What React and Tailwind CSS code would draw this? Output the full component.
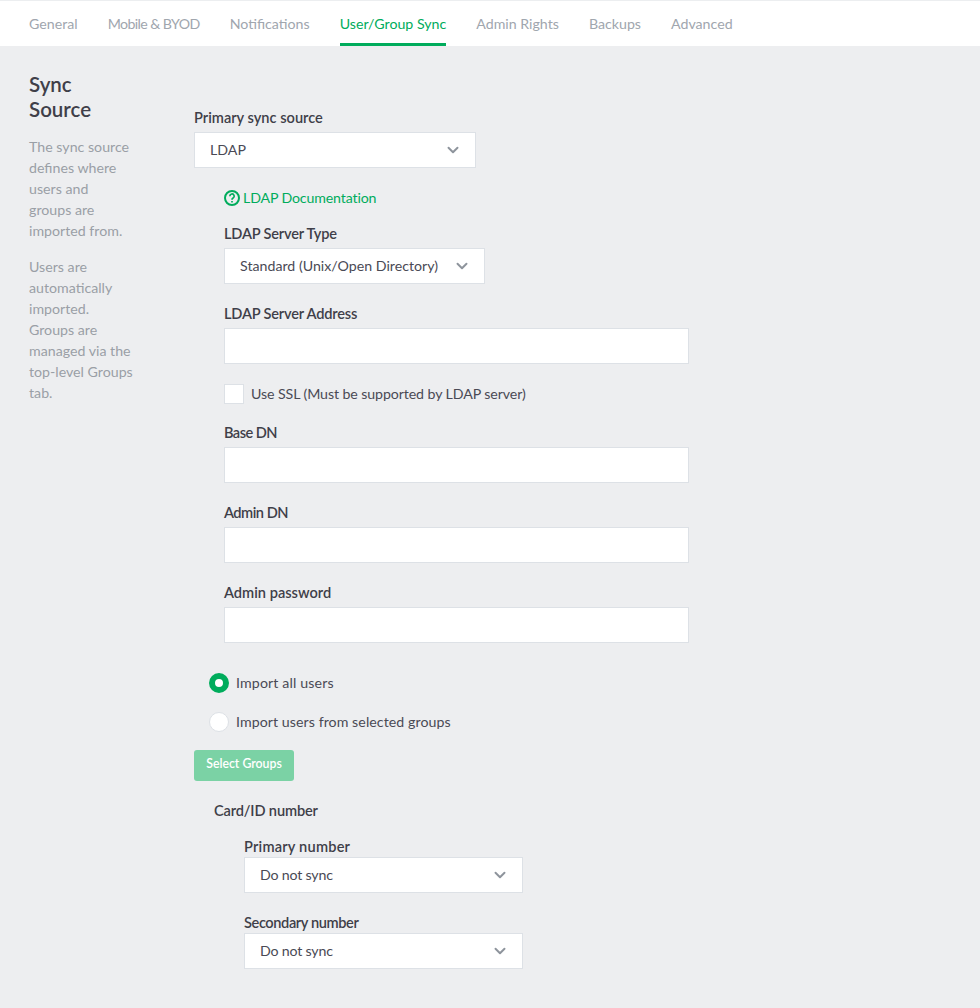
import React from 'react';
import { ChevronDown } from 'lucide-react';

const tabs = [
  { label: 'General', cls: '' },
  { label: 'Mobile & BYOD', cls: 'tracking-[-0.6px]' },
  { label: 'Notifications', cls: '' },
  { label: 'User/Group Sync', cls: '' },
  { label: 'Admin Rights', cls: '' },
  { label: 'Backups', cls: '' },
  { label: 'Advanced', cls: '' },
];

const Select = ({ value, className, textClass = '' }) => (
  <div className={`h-9 bg-white border border-[#dde1e6] flex items-center justify-between pl-[15px] text-[#4a4a55] ${className}`}>
    <span className={`leading-[18px] ${textClass}`}>{value}</span>
    <ChevronDown size={18} strokeWidth={2.6} className="text-[#8e949c]" />
  </div>
);

const Label = ({ children, className = '' }) => (
  <div className={`h-5 leading-5 text-[14.6px] font-semibold text-[#3f3f49] ${className}`}>{children}</div>
);

const Input = () => <div className="w-[465px] h-9 bg-white border border-[#dde1e6]" />;

export default function App() {
  return (
    <div className="min-h-[1008px] bg-[#edeef0] text-[14.2px] font-['Lato','Open_Sans',sans-serif]">
      {/* TAB NAV */}
      <div className="h-[46px] bg-white border-t border-[#eceef0] flex pl-[29px] gap-[30px]">
        {tabs.map((tab) => (
          <div key={tab.label} className={`pt-[13px] leading-5 ${tab.cls} ${tab.label === 'User/Group Sync' ? 'text-[#00ac5c] border-b-[3px] border-[#00ac5c]' : 'text-[#a0a6ae]'}`}>{tab.label}</div>
        ))}
      </div>

      <div className="flex">
        {/* SIDE TEXT */}
        <div className="w-[165px] mr-[29px] pl-[29px] pr-[31px] pt-[26px] shrink-0">
          <h2 className="text-[20.5px] leading-[25px] font-semibold text-[#3f3f49]">Sync Source</h2>
          <p className="mt-[14px] leading-[21px] text-[#9a9fa6]">The sync source defines where users and groups are imported from.</p>
          <p className="mt-[15px] leading-[21px] text-[#9a9fa6]">Users are automatically imported. Groups are managed via the top-level Groups tab.</p>
        </div>

        {/* FORM */}
        <div className="pt-[62px]">
          <Label>Primary sync source</Label>
          <Select value="LDAP" className="w-[282px] mt-1 pr-[13px]" />

          <div className="pl-[30px]">
            <div className="mt-5 flex items-center gap-[3px] h-5 text-[#00ac5c]">
              <svg width="16" height="16" viewBox="0 0 16 16" fill="none" stroke="#00ac5c">
                <circle cx="8" cy="8" r="7" strokeWidth="2" />
                <path d="M5.8 6.2a2.2 2.2 0 1 1 3.3 1.9c-.7.4-1.1.8-1.1 1.6" strokeWidth="1.7" />
                <path d="M8 11v1.6" strokeWidth="1.7" />
              </svg>
              <span className="leading-[18px] tracking-[-0.15px]">LDAP Documentation</span>
            </div>

            <Label className="mt-[16px] tracking-[-0.2px]">LDAP Server Type</Label>
            <Select value="Standard (Unix/Open Directory)" className="w-[261px] mt-1 pr-[13px]" />

            <Label className="mt-5 tracking-[-0.2px]">LDAP Server Address</Label>
            <div className="mt-1"><Input /></div>

            <div className="mt-5 h-5 flex items-center gap-[7px] text-[#4a4a55]">
              <div className="w-5 h-5 bg-white border border-[#dde1e6]" />
              <span className="leading-[18px] tracking-[-0.1px]">Use SSL (Must be supported by LDAP server)</span>
            </div>

            <Label className="mt-[19px] tracking-[-0.55px]">Base DN</Label>
            <div className="mt-1"><Input /></div>

            <Label className="mt-5 tracking-[-0.5px]">Admin DN</Label>
            <div className="mt-1"><Input /></div>

            <Label className="mt-5">Admin password</Label>
            <div className="mt-1"><Input /></div>
          </div>

          <div className="pl-[15px] mt-[30px] flex items-center gap-[7px] h-5 text-[#4a4a55]">
            <div className="w-5 h-5 rounded-full border-[6px] border-[#00ac5c] bg-white" />
            <span className="leading-[18px] tracking-[0.13px]">Import all users</span>
          </div>
          <div className="pl-[15px] mt-[19px] flex items-center gap-[7px] h-5 text-[#4a4a55]">
            <div className="w-5 h-5 rounded-full border border-[#dde1e6] bg-white" />
            <span className="leading-[18px] tracking-[0.06px]">Import users from selected groups</span>
          </div>

          <button className="mt-[18px] w-[100px] h-[31px] rounded-[3px] bg-[#7bd2a5] text-white text-[12.3px] font-semibold flex items-center justify-center pb-[3px]">Select Groups</button>

          <Label className="mt-5 ml-5 tracking-[-0.15px]">Card/ID number</Label>
          <div className="pl-[50px]">
            <Label className="mt-4 tracking-[0.2px]">Primary number</Label>
            <Select value="Do not sync" textClass="tracking-[-0.2px]" className="w-[279px] mt-0 pr-[13px]" />
            <Label className="mt-5 tracking-[-0.4px]">Secondary number</Label>
            <Select value="Do not sync" textClass="tracking-[-0.2px]" className="w-[279px] mt-0 pr-[13px]" />
          </div>
        </div>
      </div>
    </div>
  );
}
